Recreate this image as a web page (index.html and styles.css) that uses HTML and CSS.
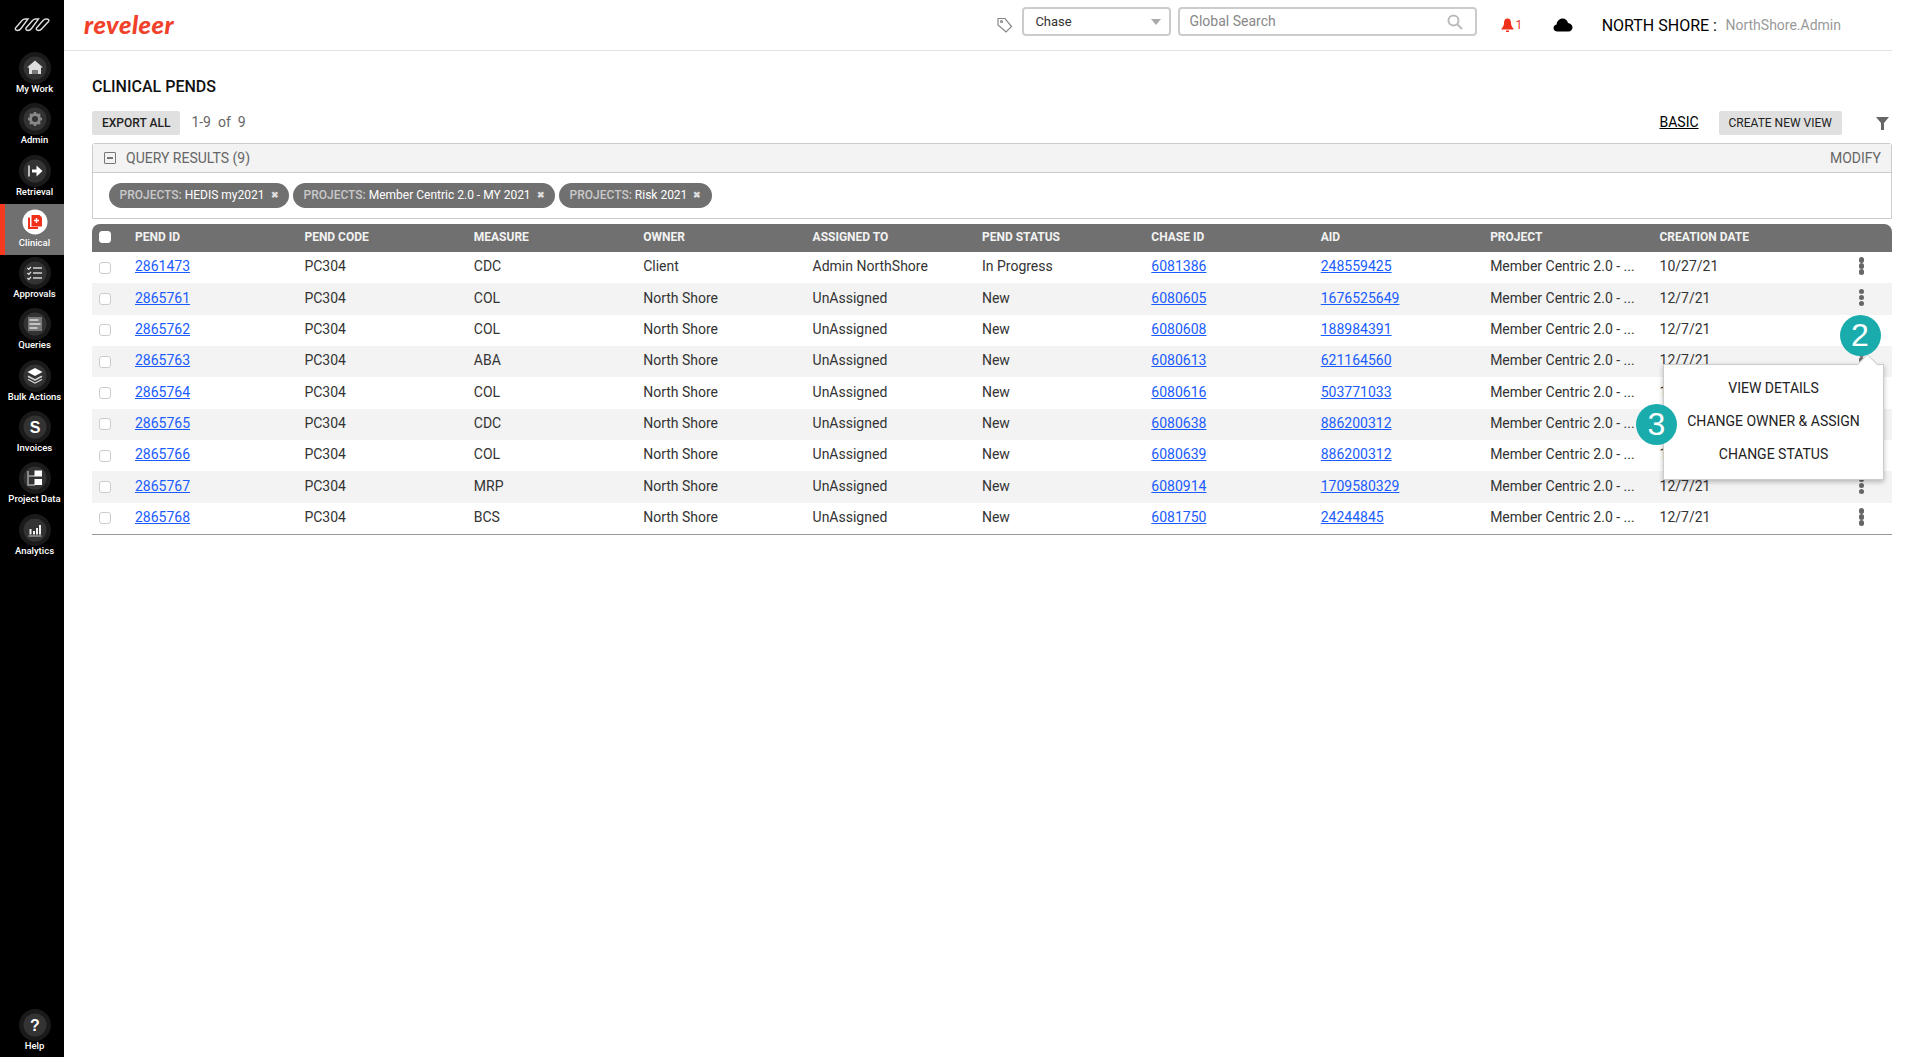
FILE: index.html
```html
<!DOCTYPE html>
<html lang="en">
<head>
<meta charset="utf-8">
<title>Clinical Pends</title>
<link rel="stylesheet" href="styles.css">
</head>
<body>
<aside class="sidebar">
  <div class="brand">
    <svg width="36" height="18" viewBox="0 0 36 18" fill="none" stroke="#ddd" stroke-width="1.4">
      <path d="M1.5 12 L8 4.5 Q9.5 3 11 3 L14 3 L7 12.5 Q5.5 14.5 3.5 14.5 Q0.5 14 1.5 12Z"/>
      <path d="M12 12 L18.5 4.5 Q20 3 21.5 3 L24.5 3 L17.5 12.5 Q16 14.5 14 14.5 Q11 14 12 12Z"/>
      <path d="M22.5 12 L29 4.5 Q30.5 3 32 3 Q36 3 34.5 5.5 L28 12.5 Q26.5 14.5 24.5 14.5 Q21.5 14 22.5 12Z"/>
    </svg>
  </div>
  <a class="nav-item">
    <svg class="nav-icon" viewBox="0 0 34 34"><circle cx="17" cy="17" r="16" class="ring"/><circle cx="17" cy="17" r="11.5" class="disc"/><path d="M17 9.5 L25 16.5 L23 16.5 L23 23 L11 23 L11 16.5 L9 16.5Z" fill="#ddd"/><path d="M14 19h6v4h-6z" fill="#777"/></svg>
    <span>My Work</span>
  </a>
  <a class="nav-item">
    <svg class="nav-icon" viewBox="0 0 34 34"><circle cx="17" cy="17" r="16" class="ring"/><circle cx="17" cy="17" r="11.5" class="disc"/><circle cx="17" cy="17" r="4.5" fill="none" stroke="#888" stroke-width="3"/><path d="M17 10v3M17 21v3M10 17h3M21 17h3M12 12l2 2M20 20l2 2M22 12l-2 2M14 20l-2 2" stroke="#888" stroke-width="2.4"/></svg>
    <span>Admin</span>
  </a>
  <a class="nav-item">
    <svg class="nav-icon" viewBox="0 0 34 34"><circle cx="17" cy="17" r="16" class="ring"/><circle cx="17" cy="17" r="11.5" class="disc"/><path d="M11 11.500v11" stroke="#eee" stroke-width="1.500"/><path d="M14 15.500h4.500v-4l6 5.500-6 5.500v-4H14z" fill="#fff"/></svg>
    <span>Retrieval</span>
  </a>
  <a class="nav-item nav-active">
    <svg class="nav-icon" viewBox="0 0 34 34"><circle cx="17" cy="17" r="12.500" fill="#fff"/><path d="M11 12.500v10.500h9" fill="none" stroke="#f1301c" stroke-width="2"/><path d="M13.500 10h8l2.500 2.500v9h-10.500z" fill="#f1301c"/><path d="M18.500 13v5M16 15.500h5" stroke="#fff" stroke-width="1.400"/></svg>
    <span>Clinical</span>
  </a>
  <a class="nav-item">
    <svg class="nav-icon" viewBox="0 0 34 34"><circle cx="17" cy="17" r="16" class="ring"/><circle cx="17" cy="17" r="11.500" class="disc"/><path d="M15 12h9M15 17h9M15 22h9" stroke="#aaa" stroke-width="2"/><path d="M9.500 12l1.300 1.300 2.200-2.500M9.500 17l1.300 1.300 2.200-2.500M9.500 22l1.300 1.300 2.200-2.500" fill="none" stroke="#eee" stroke-width="1.200"/></svg>
    <span>Approvals</span>
  </a>
  <a class="nav-item">
    <svg class="nav-icon" viewBox="0 0 34 34"><circle cx="17" cy="17" r="16" class="ring"/><circle cx="17" cy="17" r="11.500" class="disc"/><path d="M10 10h14v14H10z" fill="#777"/><path d="M11.500 13h9M11.500 17h11M11.500 21h8" stroke="#ddd" stroke-width="1.500"/></svg>
    <span>Queries</span>
  </a>
  <a class="nav-item">
    <svg class="nav-icon" viewBox="0 0 34 34"><circle cx="17" cy="17" r="16" class="ring"/><circle cx="17" cy="17" r="11.500" class="disc"/><path d="M17 9l7.500 4-7.500 4-7.500-4z" fill="#fff"/><path d="M10.500 16.500l6.500 3.500 6.500-3.500 1 1.500-7.500 4-7.500-4z" fill="#ccc"/><path d="M10.500 20l6.500 3.500 6.500-3.500 1 .8-7.500 4-7.500-4z" fill="#ddd"/></svg>
    <span>Bulk Actions</span>
  </a>
  <a class="nav-item">
    <svg class="nav-icon" viewBox="0 0 34 34"><circle cx="17" cy="17" r="16" class="ring"/><circle cx="17" cy="17" r="11.500" class="disc"/><text x="17" y="22.500" text-anchor="middle" class="glyph">S</text></svg>
    <span>Invoices</span>
  </a>
  <a class="nav-item">
    <svg class="nav-icon" viewBox="0 0 34 34"><circle cx="17" cy="17" r="16" class="ring"/><circle cx="17" cy="17" r="11.500" class="disc"/><path d="M10 10v14h7M10 15h7" fill="none" stroke="#888" stroke-width="2"/><path d="M16.500 9.500h7.500v6h-7.500zM16.500 18h7.500v6h-7.500z" fill="#fff"/></svg>
    <span>Project Data</span>
  </a>
  <a class="nav-item">
    <svg class="nav-icon" viewBox="0 0 34 34"><circle cx="17" cy="17" r="16" class="ring"/><circle cx="17" cy="17" r="11.500" class="disc"/><path d="M10.500 23h13" stroke="#999" stroke-width="1.500"/><path d="M11.500 16h2v5.500h-2zM15 18h2v3.500h-2zM18 15h2v6.500h-2zM21 12h2v9.500h-2z" fill="#eee"/></svg>
    <span>Analytics</span>
  </a>
  <a class="nav-item nav-help">
    <svg class="nav-icon" viewBox="0 0 34 34"><circle cx="17" cy="17" r="16" class="ring"/><circle cx="17" cy="17" r="11.500" class="disc"/><text x="17" y="22.500" text-anchor="middle" class="glyph">?</text></svg>
    <span>Help</span>
  </a>
</aside>

<div class="main">
  <header class="topbar">
    <div class="logo">reveleer</div>
    <div class="top-right">
      <svg class="tag" width="18" height="18" viewBox="0 0 18 18" fill="none" stroke="#888" stroke-width="1.200"><path d="M2 2.500h7l6.500 8-5.500 5.500-8-7z"/><circle cx="5.500" cy="5.500" r="1"/></svg>
      <div class="select"><span>Chase</span><i class="caret"></i></div>
      <div class="search"><span>Global Search</span>
        <svg width="16" height="16" viewBox="0 0 16 16" fill="none" stroke="#bbb" stroke-width="2"><circle cx="6.500" cy="6.500" r="5"/><path d="M10 10l5 5"/></svg>
      </div>
      <div class="bell">
        <svg width="13" height="14" viewBox="0 0 13 14" fill="#f1301c"><path d="M6.500 0.500c2.500 0 3.500 2 3.500 4.500 0 3 1.500 4.500 2.500 5.500v1H.5v-1c1-1 2.500-2.500 2.500-5.500C3 2.500 4 .5 6.500.5z"/><path d="M5 12.500h3v1.500H5z"/></svg>
        <span>1</span>
      </div>
      <svg class="cloud" width="20" height="14" viewBox="0 0 20 14"><path d="M4.500 13.500C2 13.500.500 12 .500 10c0-1.800 1.200-3.200 3-3.500C4 3 6.500.500 9.500.500c2.800 0 5 2 5.500 4.500 2.500.2 4.500 2.200 4.500 4.500 0 2.300-1.800 4-4 4z" fill="#000"/></svg>
      <div class="org">NORTH SHORE :</div>
      <div class="user">NorthShore.Admin</div>
    </div>
  </header>

  <main class="content">
    <h1 class="title">CLINICAL PENDS</h1>
    <div class="toolbar">
      <button class="btn">EXPORT ALL</button>
      <span class="count">1-9&nbsp; of&nbsp; 9</span>
      <a class="basic">BASIC</a>
      <button class="btn btn-view">CREATE NEW VIEW</button>
      <svg class="funnel" width="13" height="13" viewBox="0 0 13 13"><path d="M0 0h13L8 6v7H5V6z" fill="#666"/></svg>
    </div>

    <section class="query">
      <div class="query-head">
        <i class="collapse"></i>
        <span class="query-title">QUERY RESULTS (9)</span>
        <span class="modify">MODIFY</span>
      </div>
      <div class="chips">
        <span class="chip"><em>PROJECTS:</em> HEDIS my2021 <b>✖</b></span>
        <span class="chip"><em>PROJECTS:</em> Member Centric 2.0 - MY 2021 <b>✖</b></span>
        <span class="chip"><em>PROJECTS:</em> Risk 2021 <b>✖</b></span>
      </div>
    </section>

    <div class="grid">
      <div class="row head">
        <div><i class="check check-head"></i></div><div>PEND ID</div><div>PEND CODE</div><div>MEASURE</div><div>OWNER</div><div>ASSIGNED TO</div><div>PEND STATUS</div><div>CHASE ID</div><div>AID</div><div>PROJECT</div><div>CREATION DATE</div><div></div>
      </div>
      <div class="row"><div><i class="check"></i></div><div><a>2861473</a></div><div>PC304</div><div>CDC</div><div>Client</div><div>Admin NorthShore</div><div>In Progress</div><div><a>6081386</a></div><div><a>248559425</a></div><div>Member Centric 2.0 - ...</div><div>10/27/21</div><div><i class="kebab"></i></div></div>
      <div class="row"><div><i class="check"></i></div><div><a>2865761</a></div><div>PC304</div><div>COL</div><div>North Shore</div><div>UnAssigned</div><div>New</div><div><a>6080605</a></div><div><a>1676525649</a></div><div>Member Centric 2.0 - ...</div><div>12/7/21</div><div><i class="kebab"></i></div></div>
      <div class="row"><div><i class="check"></i></div><div><a>2865762</a></div><div>PC304</div><div>COL</div><div>North Shore</div><div>UnAssigned</div><div>New</div><div><a>6080608</a></div><div><a>188984391</a></div><div>Member Centric 2.0 - ...</div><div>12/7/21</div><div><i class="kebab"></i></div></div>
      <div class="row"><div><i class="check"></i></div><div><a>2865763</a></div><div>PC304</div><div>ABA</div><div>North Shore</div><div>UnAssigned</div><div>New</div><div><a>6080613</a></div><div><a>621164560</a></div><div>Member Centric 2.0 - ...</div><div>12/7/21</div><div><i class="kebab"></i></div></div>
      <div class="row"><div><i class="check"></i></div><div><a>2865764</a></div><div>PC304</div><div>COL</div><div>North Shore</div><div>UnAssigned</div><div>New</div><div><a>6080616</a></div><div><a>503771033</a></div><div>Member Centric 2.0 - ...</div><div>12/7/21</div><div><i class="kebab"></i></div></div>
      <div class="row"><div><i class="check"></i></div><div><a>2865765</a></div><div>PC304</div><div>CDC</div><div>North Shore</div><div>UnAssigned</div><div>New</div><div><a>6080638</a></div><div><a>886200312</a></div><div>Member Centric 2.0 - ...</div><div>12/7/21</div><div><i class="kebab"></i></div></div>
      <div class="row"><div><i class="check"></i></div><div><a>2865766</a></div><div>PC304</div><div>COL</div><div>North Shore</div><div>UnAssigned</div><div>New</div><div><a>6080639</a></div><div><a>886200312</a></div><div>Member Centric 2.0 - ...</div><div>12/7/21</div><div><i class="kebab"></i></div></div>
      <div class="row"><div><i class="check"></i></div><div><a>2865767</a></div><div>PC304</div><div>MRP</div><div>North Shore</div><div>UnAssigned</div><div>New</div><div><a>6080914</a></div><div><a>1709580329</a></div><div>Member Centric 2.0 - ...</div><div>12/7/21</div><div><i class="kebab"></i></div></div>
      <div class="row"><div><i class="check"></i></div><div><a>2865768</a></div><div>PC304</div><div>BCS</div><div>North Shore</div><div>UnAssigned</div><div>New</div><div><a>6081750</a></div><div><a>24244845</a></div><div>Member Centric 2.0 - ...</div><div>12/7/21</div><div><i class="kebab"></i></div></div>

      <div class="menu">
        <div class="menu-item">VIEW DETAILS</div>
        <div class="menu-item">CHANGE OWNER &amp; ASSIGN</div>
        <div class="menu-item">CHANGE STATUS</div>
      </div>
      <div class="step step-2">2</div>
      <div class="step step-3">3</div>
    </div>
  </main>
</div>
</body>
</html>
```
FILE: styles.css
```css
* { box-sizing: border-box; }
html, body { margin: 0; height: 100%; }
body {
  display: flex;
  height: 1057px;
  overflow: hidden;
  background: #fff;
  color: #333;
  font-family: Roboto, "Liberation Sans", sans-serif;
  font-size: 14px;
}
.sidebar {
  width: 64px;
  flex: none;
  background: #000;
  display: flex;
  flex-direction: column;
}
.brand { height: 50px; display: flex; align-items: center; justify-content: center; }
.nav-item {
  height: 51.3px;
  display: flex;
  flex-direction: column;
  align-items: center;
  padding-top: 1px;
  border-left: 5px solid transparent;
  color: #fff;
  font-size: 9.500px;
  font-weight: 500;
  line-height: 12px;
  white-space: nowrap;
}
.nav-icon { width: 34px; height: 34px; display: block; margin-bottom: -2px; flex: none; }
.ring { fill: #1a1a1a; }
.disc { fill: #333; }
.glyph { fill: #fff; font-family: "Liberation Sans", sans-serif; font-weight: 700; font-size: 16px; }
.nav-active { background: #707070; border-left-color: #f53a1f; }
.nav-help { margin-top: auto; height: 50px; }

.main { flex: 1; min-width: 0; padding-right: 28px; }
.topbar {
  height: 51px;
  border-bottom: 1px solid #e3e3e3;
  display: flex;
  align-items: center;
  justify-content: space-between;
  padding-left: 20px;
}
.logo {
  color: #f1412a;
  font-family: Lato, sans-serif;
  font-weight: 900;
  font-style: italic;
  font-size: 25.500px;
  letter-spacing: 0.5px;
  position: relative;
  top: -1px;
}
.top-right { display: flex; align-items: center; height: 100%; }
.tag { margin-right: 8px; }
.select, .search {
  height: 29px;
  border: 2px solid #ccc;
  border-radius: 4px;
  display: flex;
  align-items: center;
  justify-content: space-between;
  margin-top: -7px;
  color: #333;
  font-size: 13px;
}
.select { width: 149px; padding: 0 8px 0 11px; margin-right: 7px; }
.caret { border: 5px solid transparent; border-top: 6px solid #aaa; border-bottom: 0; }
.search { width: 299px; padding: 0 12px 0 9px; color: #888; font-size: 14px; }
.search span { position: relative; top: -1px; }
.bell { display: flex; align-items: center; gap: 1px; margin-left: 24px; color: #f1301c; font-size: 12px; }
.cloud { margin-left: 30.500px; }
.org { margin-left: 29px; color: #000; font-size: 16px; }
.user { margin-left: 8.500px; margin-right: 51px; color: #999; font-size: 14px; }

.content { padding-left: 28px; position: relative; }
.title { margin: 26px 0 0; height: 20px; line-height: 20px; font-size: 16px; font-weight: 500; color: #111; }
.toolbar { display: flex; align-items: center; height: 24px; margin-top: 14px; }
.btn {
  height: 24px;
  border: 0;
  border-radius: 2px;
  background: #e0e0e0;
  color: #222;
  font: 500 12px Roboto, sans-serif;
  padding: 0 10px;
}
.count { margin-left: 11px; color: #666; font-size: 14px; position: relative; top: -1px; }
.basic { margin-left: auto; margin-right: 20px; color: #000; font-size: 14px; text-decoration: underline; position: relative; top: -1px; }
.btn-view { font-weight: 400; }
.funnel { margin: 0 3px 0 34px; }

.query { margin-top: 8px; height: 76px; border: 1px solid #ccc; border-radius: 3px 3px 0 0; }
.query-head {
  height: 29px;
  background: #f3f3f3;
  border-bottom: 1px solid #ccc;
  display: flex;
  align-items: center;
  padding: 0 10px 0 11px;
  color: #666;
  font-size: 14px;
}
.collapse { width: 12px; height: 12px; border: 1px solid #777; border-radius: 1px; margin-right: 10px; position: relative; }
.collapse::after { content: ""; position: absolute; left: 2px; right: 2px; top: 4px; height: 2px; background: #777; }
.modify { margin-left: auto; color: #666; }
.chips { display: flex; gap: 4px; padding: 10px 0 0 16px; }
.chip {
  height: 25px;
  border-radius: 13px;
  background: #707070;
  color: #fff;
  font-size: 12px;
  line-height: 25px;
  padding: 0 10.500px;
  white-space: nowrap;
}
.chip em { font-style: normal; font-weight: 500; color: #c9c9c9; }
.chip b { font-size: 9px; color: #ddd; margin-left: 3px; position: relative; top: -1px; }

.grid { margin-top: 5px; position: relative; border-bottom: 1px solid #999; }
.row {
  display: grid;
  grid-template-columns: 43px repeat(10, 169.400px) 1fr;
  height: 31.350px;
  padding-bottom: 3px;
  align-items: center;
  color: #333;
}
.row:nth-child(odd):not(.head) { background: #f3f3f3; }
.row:nth-child(even) { background: #fff; }
.row > div { white-space: nowrap; }
.row > div:first-child { padding-left: 7px; display: flex; position: relative; top: 1.500px; }
.row a { color: #1a5cff; text-decoration: underline; }
.row.head {
  height: 28px;
  background: #707070;
  color: #f3f3f3;
  font-size: 12px;
  font-weight: 700;
  border-radius: 8px 8px 0 0;
}
.head > div:first-child { top: 0; }
.check { width: 12px; height: 12px; border: 1px solid #ccc; border-radius: 3px; background: #fff; display: block; }
.check-head { border-color: #fff; }
.kebab {
  display: block;
  width: 5.500px;
  height: 5.500px;
  margin-left: 30px;
  border-radius: 50%;
  background: #666;
  box-shadow: 0 -6px 0 #666, 0 6px 0 #666;
}
.menu {
  position: absolute;
  left: 1571px;
  top: 140px;
  width: 221px;
  height: 116px;
  background: #fff;
  border: 1px solid #ccc;
  box-shadow: 0 2px 5px rgba(0, 0, 0, .25);
  display: flex;
  flex-direction: column;
  justify-content: center;
  padding-bottom: 2px;
}
.menu::before {
  content: "";
  position: absolute;
  left: 196px;
  top: -8px;
  width: 14px;
  height: 14px;
  background: #fff;
  border-left: 1px solid #ccc;
  border-top: 1px solid #ccc;
  transform: rotate(45deg);
}
.menu-item { height: 33px; line-height: 33px; text-align: center; color: #222; position: relative; }
.step {
  position: absolute;
  width: 41px;
  height: 41px;
  border-radius: 50%;
  background: #1aacac;
  color: #fff;
  font: 32px/41px "Liberation Sans", sans-serif;
  text-align: center;
}
.step-2 { left: 1747.500px; top: 90.500px; }
.step-3 { left: 1544px; top: 180px; }
```
